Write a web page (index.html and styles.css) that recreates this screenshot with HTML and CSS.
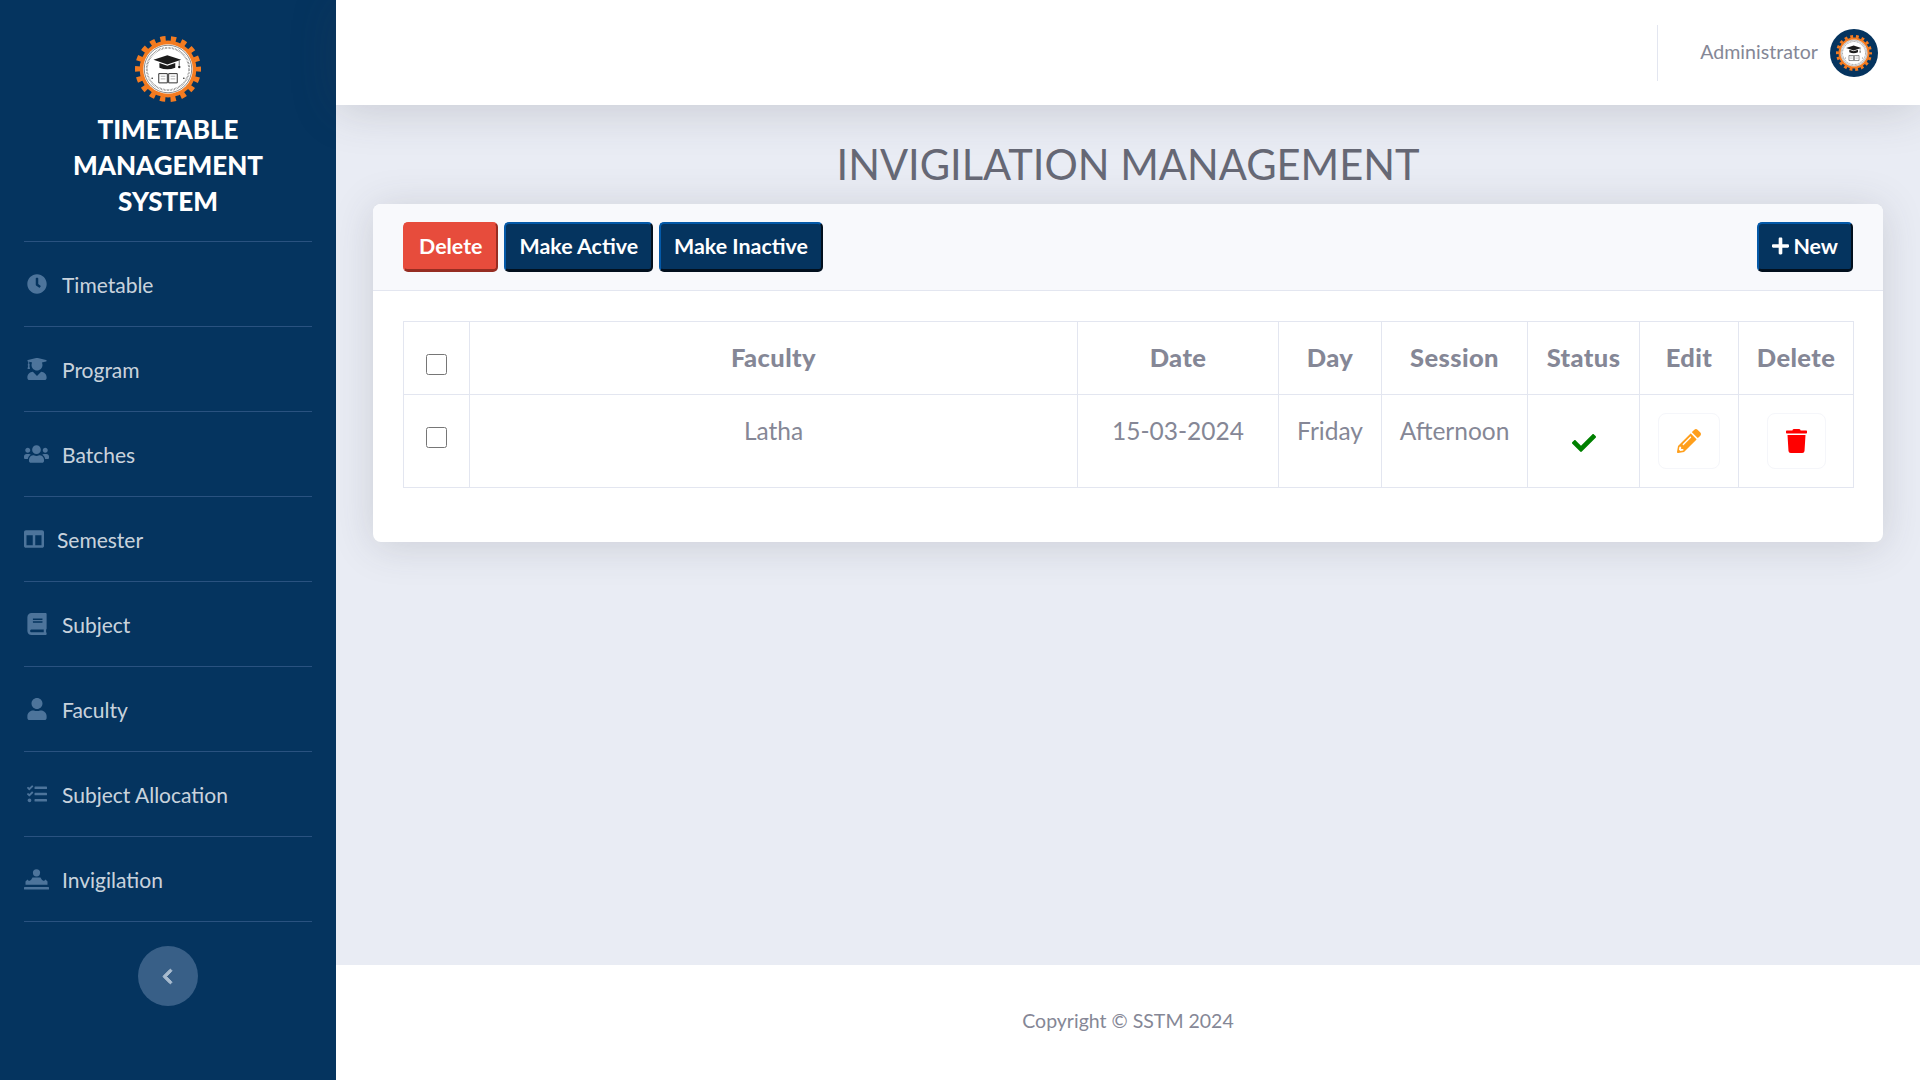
FILE: index.html
```html
<!DOCTYPE html>
<html lang="en">
<head>
  <meta charset="UTF-8" />
  <title>Invigilation Management | Timetable Management System</title>
  <link rel="stylesheet" href="styles.css">
</head>
<body>

  <svg class="defs" width="0" height="0" aria-hidden="true">
    <symbol id="logo" viewBox="0 0 100 100">
      <circle cx="50" cy="50" r="43" fill="#f47b20" />
      <circle cx="50" cy="50" r="46" fill="none" stroke="#f47b20" stroke-width="8" stroke-dasharray="8 8.06" stroke-dashoffset="4" />
      <circle cx="50" cy="50" r="37.5" fill="#fff" />
      <circle cx="50" cy="50" r="36" fill="none" stroke="#222" stroke-width="0.8" />
      <circle cx="50" cy="50" r="32" fill="none" stroke="#666" stroke-width="3" stroke-dasharray="0.8 1.4" />
      <circle cx="50" cy="50" r="27.5" fill="#fff" />
      <path d="M49 29 L70 36 L49 43 L28 36Z" fill="#1b1b1b" />
      <path d="M37 41 L49 45 L61 41 V48 Q49 53 37 48Z" fill="#1b1b1b" />
      <path d="M67 37 V45" stroke="#1b1b1b" stroke-width="1" fill="none" />
      <circle cx="67" cy="47" r="1.8" fill="#1b1b1b" />
      <path d="M36 57 H49 V71 H36Z M51 57 H64 V71 H51Z" fill="#fff" stroke="#333" stroke-width="1.5" />
      <path d="M39 61 H46 M39 65 H46 M54 61 H61 M54 65 H61" stroke="#888" stroke-width="1" />
      <circle cx="26" cy="64" r="1.2" fill="#222" />
      <circle cx="74" cy="64" r="1.2" fill="#222" />
    </symbol>
  </svg>

  <aside class="sidebar">
    <div class="brand">
      <svg class="brand-logo"><use href="#logo" /></svg>
      <div class="brand-name">TIMETABLE MANAGEMENT SYSTEM</div>
    </div>

    <nav class="side-nav">
      <a href="#" class="nav-item">
        <span class="nav-icon"><svg width="20" height="20" viewBox="0 0 512 512"><path d="M256,8C119,8,8,119,8,256S119,504,256,504,504,393,504,256,393,8,256,8Zm92.49,313h0l-20,25a16,16,0,0,1-22.49,2.5h0l-67-49.72a40,40,0,0,1-15-31.23V112a16,16,0,0,1,16-16h32a16,16,0,0,1,16,16V256l58,42.5A16,16,0,0,1,348.49,321Z"/></svg></span>
        Timetable
      </a>
      <a href="#" class="nav-item">
        <span class="nav-icon"><svg width="20" height="22" viewBox="0 0 448 512"><path d="M319.4 320.6L224 416l-95.4-95.4C57.1 323.7 0 382.2 0 454.4v9.6c0 26.5 21.5 48 48 48h352c26.5 0 48-21.5 48-48v-9.6c0-72.2-57.1-130.7-128.6-133.8zM13.6 79.8l6.4 1.5v58.4c-7 4.2-12 11.5-12 20.3 0 8.4 4.6 15.4 11.1 19.7L3.5 242c-1.7 6.9 2.1 14 7.6 14h41.8c5.5 0 9.3-7.1 7.6-14l-15.6-62.3C51.4 175.4 56 168.4 56 160c0-8.8-5-16.1-12-20.3V87.1l66 15.9c-8.6 17.2-14 36.4-14 57 0 70.7 57.3 128 128 128s128-57.3 128-128c0-20.6-5.3-39.8-14-57l96.3-23.2c18.2-4.4 18.2-27.1 0-31.5l-190.4-46c-13-3.1-26.7-3.1-39.7 0L13.6 48.2c-18.1 4.4-18.1 27.2 0 31.6z"/></svg></span>
        Program
      </a>
      <a href="#" class="nav-item">
        <span class="nav-icon"><svg width="25" height="20" viewBox="0 0 640 512"><path d="M96 224c35.3 0 64-28.7 64-64s-28.7-64-64-64-64 28.7-64 64 28.7 64 64 64zm448 0c35.3 0 64-28.7 64-64s-28.7-64-64-64-64 28.7-64 64 28.7 64 64 64zm32 32h-64c-17.6 0-33.5 7.1-45.1 18.6 40.3 22.1 68.9 62 75.1 109.4h66c17.7 0 32-14.3 32-32v-32c0-35.3-28.7-64-64-64zm-256 0c61.9 0 112-50.1 112-112S381.9 32 320 32 208 82.1 208 144s50.1 112 112 112zm76.8 32h-8.3c-20.8 10-43.9 16-68.5 16s-47.6-6-68.5-16h-8.3C179.6 288 128 339.6 128 403.2V432c0 26.5 21.5 48 48 48h288c26.5 0 48-21.5 48-48v-28.8c0-63.6-51.6-115.2-115.2-115.2zm-223.7-13.4C161.5 263.1 145.6 256 128 256H64c-35.3 0-64 28.7-64 64v32c0 17.7 14.3 32 32 32h65.9c6.3-47.4 34.9-87.3 75.2-109.4z"/></svg></span>
        Batches
      </a>
      <a href="#" class="nav-item">
        <span class="nav-icon nav-icon-plain"><svg width="20" height="20" viewBox="0 0 512 512"><path d="M464 32H48C21.49 32 0 53.49 0 80v352c0 26.51 21.49 48 48 48h416c26.51 0 48-21.49 48-48V80c0-26.51-21.49-48-48-48zM224 416H64V160h160v256zm224 0H288V160h160v256z"/></svg></span>
        Semester
      </a>
      <a href="#" class="nav-item">
        <span class="nav-icon"><svg width="20" height="22" viewBox="0 0 448 512"><path d="M448 360V24c0-13.3-10.7-24-24-24H96C43 0 0 43 0 96v320c0 53 43 96 96 96h328c13.3 0 24-10.7 24-24v-16c0-7.5-3.5-14.3-8.9-18.7-4.2-15.4-4.2-59.3 0-74.7 5.4-4.3 8.9-11.1 8.9-18.6zM128 134c0-3.3 2.7-6 6-6h212c3.3 0 6 2.7 6 6v20c0 3.3-2.7 6-6 6H134c-3.3 0-6-2.7-6-6v-20zm0 64c0-3.3 2.7-6 6-6h212c3.3 0 6 2.7 6 6v20c0 3.3-2.7 6-6 6H134c-3.3 0-6-2.7-6-6v-20zm253.4 250H96c-17.7 0-32-14.3-32-32 0-17.6 14.4-32 32-32h285.4c-1.9 17.1-1.9 46.9 0 64z"/></svg></span>
        Subject
      </a>
      <a href="#" class="nav-item">
        <span class="nav-icon"><svg width="20" height="22" viewBox="0 0 448 512"><path d="M224 256c70.7 0 128-57.3 128-128S294.7 0 224 0 96 57.3 96 128s57.3 128 128 128zm89.6 32h-16.7c-22.2 10.2-46.9 16-72.9 16s-50.6-5.8-72.9-16h-16.7C60.2 288 0 348.2 0 422.4V464c0 26.5 21.5 48 48 48h352c26.5 0 48-21.5 48-48v-41.6c0-74.2-60.2-134.4-134.4-134.4z"/></svg></span>
        Faculty
      </a>
      <a href="#" class="nav-item">
        <span class="nav-icon"><svg width="20" height="20" viewBox="0 0 512 512"><path d="M139.61 35.5a12 12 0 0 0-17 0L58.93 98.81l-22.7-22.12a12 12 0 0 0-17 0L3.53 92.41a12 12 0 0 0 0 17l47.59 47.4a12.78 12.78 0 0 0 17.61 0l15.59-15.62L156.52 69a12.09 12.09 0 0 0 .09-17zm0 159.19a12 12 0 0 0-17 0l-63.68 63.72-22.7-22.1a12 12 0 0 0-17 0L3.53 252a12 12 0 0 0 0 17L51 316.5a12.77 12.77 0 0 0 17.6 0l15.7-15.69 72.2-72.22a12 12 0 0 0 .09-16.9zM64 368c-26.49 0-48.59 21.5-48.59 48S37.53 464 64 464a48 48 0 0 0 0-96zm432 16H208a16 16 0 0 0-16 16v32a16 16 0 0 0 16 16h288a16 16 0 0 0 16-16v-32a16 16 0 0 0-16-16zm0-320H208a16 16 0 0 0-16 16v32a16 16 0 0 0 16 16h288a16 16 0 0 0 16-16V80a16 16 0 0 0-16-16zm0 160H208a16 16 0 0 0-16 16v32a16 16 0 0 0 16 16h288a16 16 0 0 0 16-16v-32a16 16 0 0 0-16-16z"/></svg></span>
        Subject Allocation
      </a>
      <a href="#" class="nav-item">
        <span class="nav-icon"><svg width="25" height="21" viewBox="0 0 25 21"><circle cx="12.5" cy="3.8" r="3.6"/><path d="M8.5 8.5 H16.5 L18 11 L20 12 L21.5 10.5 L23.5 12.5 V15.8 H1.5 V12.5 L3.5 10.5 L5 12 L7 11Z"/><rect x="0" y="18" width="25" height="2.4" rx="0.5"/></svg></span>
        Invigilation
      </a>
    </nav>

    <button class="side-toggle" aria-label="Toggle sidebar">
      <svg width="11" height="17" viewBox="0 0 320 512"><path d="M34.52 239.03L228.87 44.69c9.37-9.37 24.57-9.37 33.94 0l22.67 22.67c9.36 9.36 9.37 24.52.04 33.9L131.49 256l154.02 154.75c9.34 9.38 9.32 24.54-.04 33.9l-22.67 22.67c-9.37 9.37-24.57 9.37-33.94 0L34.52 272.97c-9.37-9.37-9.37-24.57 0-33.94z"/></svg>
    </button>
  </aside>

  <div class="content">
    <header class="topbar">
      <div class="topbar-divider"></div>
      <span class="user-name">Administrator</span>
      <span class="avatar"><svg class="avatar-logo"><use href="#logo" /></svg></span>
    </header>

    <main class="main">
      <h1 class="page-title">INVIGILATION MANAGEMENT</h1>

      <section class="card">
        <div class="card-header">
          <div class="btn-group">
            <button class="btn btn-red">Delete</button>
            <button class="btn btn-navy">Make Active</button>
            <button class="btn btn-navy">Make Inactive</button>
          </div>
          <button class="btn btn-navy">
            <svg class="plus-icon" viewBox="0 0 448 512"><path d="M416 208H272V64c0-17.67-14.33-32-32-32h-32c-17.67 0-32 14.33-32 32v144H32c-17.67 0-32 14.33-32 32v32c0 17.67 14.33 32 32 32h144v144c0 17.67 14.33 32 32 32h32c17.67 0 32-14.33 32-32V304h144c17.67 0 32-14.33 32-32v-32c0-17.67-14.33-32-32-32z"/></svg>
            New
          </button>
        </div>

        <div class="card-body">
          <table class="data-table">
            <colgroup>
              <col class="col-check">
              <col class="col-faculty">
              <col class="col-date">
              <col class="col-day">
              <col class="col-session">
              <col class="col-status">
              <col class="col-edit">
              <col class="col-delete">
            </colgroup>
            <thead>
              <tr>
                <th><input type="checkbox" class="row-check"></th>
                <th>Faculty</th>
                <th>Date</th>
                <th>Day</th>
                <th>Session</th>
                <th>Status</th>
                <th>Edit</th>
                <th>Delete</th>
              </tr>
            </thead>
            <tbody>
              <tr>
                <td><input type="checkbox" class="row-check"></td>
                <td>Latha</td>
                <td>15-03-2024</td>
                <td>Friday</td>
                <td>Afternoon</td>
                <td>
                  <svg class="status-icon" viewBox="0 0 512 512"><path d="M173.898 439.404l-166.4-166.4c-9.997-9.997-9.997-26.206 0-36.204l36.203-36.204c9.997-9.998 26.207-9.998 36.204 0L192 312.69 432.095 72.596c9.997-9.997 26.207-9.997 36.204 0l36.203 36.204c9.997 9.997 9.997 26.206 0 36.204l-294.4 294.401c-9.998 9.997-26.207 9.997-36.204-.001z"/></svg>
                </td>
                <td>
                  <button class="icon-btn icon-btn-edit">
                    <svg width="24" height="24" viewBox="0 0 512 512"><path d="M497.9 142.1l-46.1 46.1c-4.7 4.7-12.3 4.7-17 0l-111-111c-4.7-4.7-4.7-12.3 0-17l46.1-46.1c18.7-18.7 49.1-18.7 67.9 0l60.1 60.1c18.8 18.7 18.8 49.1 0 67.9zM284.2 99.8L21.6 362.4.4 483.9c-2.9 16.4 11.4 30.6 27.8 27.8l121.5-21.3 262.6-262.6c4.7-4.7 4.7-12.3 0-17l-111-111c-4.8-4.7-12.4-4.7-17.1 0zM124.1 339.9c-5.5-5.5-5.5-14.3 0-19.8l154-154c5.5-5.5 14.3-5.5 19.8 0s5.5 14.3 0 19.8l-154 154c-5.5 5.5-14.3 5.5-19.8 0zM88 424h48v36.3l-64.5 11.3-31.1-31.1L51.7 376H88v48z"/></svg>
                  </button>
                </td>
                <td>
                  <button class="icon-btn icon-btn-delete">
                    <svg width="21" height="24" viewBox="0 0 448 512"><path d="M432 32H312l-9.4-18.7A24 24 0 0 0 281.1 0H166.8a23.72 23.72 0 0 0-21.4 13.3L136 32H16A16 16 0 0 0 0 48v32a16 16 0 0 0 16 16h416a16 16 0 0 0 16-16V48a16 16 0 0 0-16-16zM53.2 467a48 48 0 0 0 47.9 45h245.8a48 48 0 0 0 47.9-45L416 128H32z"/></svg>
                  </button>
                </td>
              </tr>
            </tbody>
          </table>
        </div>
      </section>
    </main>

    <footer class="footer">Copyright © SSTM 2024</footer>
  </div>

</body>
</html>
```

FILE: styles.css
```css
* {
  box-sizing: border-box;
}

body {
  margin: 0;
  height: 100vh;
  display: flex;
  overflow: hidden;
  font-family: 'Lato', 'Noto Sans', sans-serif;
  background: #e9ecf4;
  color: #858796;
}

.defs {
  position: absolute;
}

/* sidebar */
.sidebar {
  width: 336px;
  flex-shrink: 0;
  display: flex;
  flex-direction: column;
  align-items: center;
  background: #05345f;
  padding: 0 24px;
}

.brand {
  width: 100%;
  padding-top: 36px;
  display: flex;
  flex-direction: column;
  align-items: center;
  border-bottom: 1px solid #2a5280;
  height: 242px;
}

.brand-logo {
  width: 66px;
  height: 66px;
  margin-bottom: 9px;
}

.brand-name {
  width: 240px;
  text-align: center;
  color: #fff;
  font-size: 26px;
  font-weight: 900;
  line-height: 36px;
}

.side-nav {
  width: 100%;
  display: flex;
  flex-direction: column;
}

.nav-item {
  height: 85px;
  display: flex;
  align-items: center;
  gap: 13px;
  border-bottom: 1px solid #2a5280;
  color: rgba(255, 255, 255, 0.8);
  text-decoration: none;
  font-size: 21px;
}

.nav-icon {
  width: 25px;
  display: flex;
  justify-content: center;
  fill: #4d749b;
}

.nav-icon-plain {
  width: 20px;
}

.side-toggle {
  width: 60px;
  height: 60px;
  margin-top: 24px;
  border: none;
  border-radius: 50%;
  background: #385f87;
  fill: #a9bccf;
  stroke: #a9bccf;
  stroke-width: 30;
  display: flex;
  align-items: center;
  justify-content: center;
  padding: 0 2px 0 0;
}

/* top area */
.content {
  flex: 1;
  min-width: 0;
  display: flex;
  flex-direction: column;
}

.topbar {
  height: 105px;
  flex-shrink: 0;
  display: flex;
  align-items: center;
  justify-content: flex-end;
  padding-right: 42px;
  background: #fff;
  box-shadow: 0 4px 48px rgba(58, 59, 69, 0.2);
  position: relative;
}

.topbar-divider {
  width: 1px;
  height: 56px;
  margin-right: 42px;
  background: #e3e6f0;
}

.user-name {
  font-size: 19.6px;
  margin: 0 12px 3px 0;
}

.avatar {
  width: 48px;
  height: 48px;
  border-radius: 50%;
  background: #05345f;
  display: flex;
  align-items: center;
  justify-content: center;
}

.avatar-logo {
  width: 36px;
  height: 36px;
}

.main {
  flex: 1;
  padding: 0 37px;
}

.page-title {
  margin: 0;
  height: 99px;
  padding-top: 30px;
  text-align: center;
  font-size: 41.6px;
  font-weight: 400;
  line-height: 58px;
  color: #666875;
}

.card {
  height: 338px;
  background: #fff;
  border-radius: 8px;
  box-shadow: 0 4px 40px rgba(58, 59, 69, 0.17);
  overflow: hidden;
}

.card-header {
  height: 87px;
  display: flex;
  justify-content: space-between;
  align-items: flex-start;
  padding: 18px 30px 0;
  background: #f8f9fc;
  border-bottom: 1px solid #e3e6f0;
}

.btn-group {
  display: flex;
  gap: 6px;
}

.btn {
  height: 50px;
  padding: 0 13px 2px;
  border-radius: 5px;
  border-width: 2px 2px 3px;
  border-style: solid;
  color: #fff;
  font-family: inherit;
  font-size: 21.4px;
  font-weight: 700;
  display: flex;
  align-items: center;
  gap: 4px;
}

.btn-red {
  padding: 0 14px 2px;
  background: #e74c3c;
  border-color: #e74c3c #962d22 #962d22 #e74c3c;
}

.btn-navy {
  background: #05345f;
  border-color: #0459a8 #02101e #02101e #0459a8;
  fill: #fff;
}

.plus-icon {
  width: 17px;
  height: 20px;
}

.card-body {
  padding: 30px;
}

/* table */
.data-table {
  width: 100%;
  table-layout: fixed;
  border-collapse: collapse;
  font-size: 24.5px;
}

.col-check { width: 66px; }
.col-faculty { width: 608px; }
.col-date { width: 201px; }
.col-day { width: 103px; }
.col-session { width: 146px; }
.col-status { width: 112px; }
.col-edit { width: 99px; }
.col-delete { width: 115px; }

.data-table th,
.data-table td {
  border: 1px solid #e3e6f0;
  padding: 18px 0;
  text-align: center;
  vertical-align: top;
  line-height: 36px;
}

.data-table th {
  padding: 17px 0 19px;
  font-size: 25.5px;
  font-weight: 900;
  letter-spacing: 0.4px;
}

.row-check {
  display: block;
  width: 21px;
  height: 21px;
  margin: 14px auto 0;
}

.data-table th .row-check {
  margin-top: 15px;
}

.status-icon {
  display: block;
  width: 24px;
  height: 24px;
  margin: 18px auto 0;
  fill: green;
}

.icon-btn {
  height: 56px;
  border: 1px solid #f5f6fa;
  border-radius: 8px;
  background: #fff;
  padding: 0;
  display: inline-flex;
  align-items: center;
  justify-content: center;
  vertical-align: top;
}

.icon-btn-edit {
  width: 62px;
  fill: #ff9f1c;
}

.icon-btn-delete {
  width: 59px;
  fill: #ff0000;
}

.footer {
  height: 115px;
  flex-shrink: 0;
  display: flex;
  align-items: center;
  justify-content: center;
  padding-bottom: 5px;
  background: #fff;
  font-size: 19.5px;
}
```
